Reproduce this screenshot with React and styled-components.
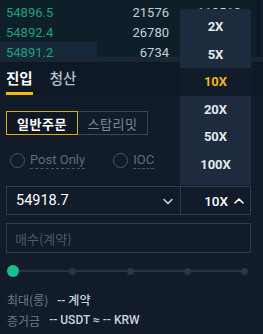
import React from "react";
import styled, { createGlobalStyle } from "styled-components";

const Global = createGlobalStyle`
  html, body { margin: 0; padding: 0; background: #111b29; }
  body { font-family: Roboto, "Noto Sans CJK KR", sans-serif; width: 263px; height: 334px; overflow: hidden; }
  * { box-sizing: border-box; }
`;

const Page = styled.div`
  position: relative;
  width: 263px;
  height: 334px;
  background: #111b29;
`;

const Book = styled.div`
  height: 57px;
  overflow: hidden;
  background: #0e1f2a;
  padding-top: 2px;
  border-right: 2px solid #0a1620;
  margin-right: 4px;
`;

const BookRow = styled.div`
  position: relative;
  height: 20px;
  display: grid;
  grid-template-columns: 110px 59px 1fr;
  align-items: center;
  font-size: 13px;
  background: ${(p) => (p.$depth ? `linear-gradient(90deg, #16293a 0 ${p.$depth}px, transparent ${p.$depth}px)` : "transparent")};
`;

const Price = styled.span`
  color: #1fa07f;
  padding-left: 6px;
`;

const Qty = styled.span`
  color: #c5cfdb;
  text-align: right;
`;

const Total = styled.span`
  color: #c5cfdb;
  text-align: right;
  padding-right: 16px;
`;

const Divider = styled.div`
  height: 5px;
  background: #1b2634;
`;

const Tabs = styled.div`
  display: flex;
  gap: 17px;
  padding: 0 6px;
  height: 33px;
  background: #0f1926;
`;

const Tab = styled.div`
  position: relative;
  display: flex;
  align-items: center;
  font-family: "Noto Sans CJK KR", sans-serif;
  font-size: 14.5px;
  font-weight: ${(p) => (p.$active ? 700 : 500)};
  color: ${(p) => (p.$active ? "#ffffff" : "#b6c0cc")};
  padding-bottom: 2px;
  &::after {
    content: "";
    display: ${(p) => (p.$active ? "block" : "none")};
    position: absolute;
    left: 0;
    right: 0;
    bottom: 0;
    height: 3px;
    background: #f0b90b;
  }
`;

const Form = styled.div`
  padding: 16px 12px 0 6px;
  display: flex;
  flex-direction: column;
`;

const Segment = styled.div`
  display: flex;
  height: 24px;
`;

const SegBtn = styled.div`
  width: ${(p) => p.$w}px;
  display: flex;
  align-items: center;
  justify-content: center;
  font-family: "Noto Sans CJK KR", sans-serif;
  font-size: 13px;
  font-weight: ${(p) => (p.$active ? 700 : 400)};
  color: ${(p) => (p.$active ? "#ffffff" : "#7b8796")};
  border: 1px solid ${(p) => (p.$active ? "#d9ac1a" : "#3a4656")};
  border-left-width: ${(p) => (p.$active ? "1px" : "0")};
  background: ${(p) => (p.$active ? "#0e1722" : "transparent")};
  letter-spacing: 0.5px;
`;

const Radios = styled.div`
  display: flex;
  align-items: center;
  height: 18px;
  margin-top: 16px;
  padding-left: 4px;
  gap: 28px;
`;

const RadioItem = styled.div`
  display: flex;
  align-items: center;
  gap: 5px;
`;

const Circle = styled.span`
  width: 15px;
  height: 15px;
  border-radius: 50%;
  border: 1px solid #4a5666;
`;

const RadioLabel = styled.span`
  font-size: 13px;
  color: #5f6c7c;
  border-bottom: 1px dashed #4e5a6a;
  line-height: 16px;
`;

const InputRow = styled.div`
  display: flex;
  height: 29px;
  margin-top: 17px;
  border: 1px solid #2f3b4b;
`;

const PriceField = styled.div`
  width: 174px;
  display: flex;
  align-items: center;
  justify-content: space-between;
  padding: 0 6px 0 9px;
  font-size: 14.5px;
  color: #ffffff;
  border-right: 1px solid #2f3b4b;
`;

const LevField = styled.div`
  flex: 1;
  display: flex;
  align-items: center;
  justify-content: flex-end;
  gap: 5px;
  padding-right: 5px;
  font-size: 13.5px;
  font-weight: 500;
  color: #ffffff;
`;

const AmountField = styled.div`
  height: 30px;
  margin-top: 8px;
  border: 1px solid #2f3b4b;
  display: flex;
  align-items: center;
  padding-left: 8px;
  font-family: "Noto Sans CJK KR", sans-serif;
  font-size: 13px;
  color: #4d5969;
`;

const Slider = styled.div`
  position: relative;
  height: 14px;
  margin-top: 11px;
  display: flex;
  align-items: center;
  justify-content: space-between;
  padding: 0 3px 0 1px;
  &::before {
    content: "";
    position: absolute;
    left: 6px;
    right: 6px;
    top: 6px;
    height: 2px;
    background: #273241;
  }
`;

const Dot = styled.span`
  position: relative;
  width: ${(p) => (p.$on ? 12 : 7)}px;
  height: ${(p) => (p.$on ? 12 : 7)}px;
  border-radius: 50%;
  background: ${(p) => (p.$on ? "#17c08a" : "#2b3645")};
`;

const Info = styled.div`
  margin-top: 13px;
  display: flex;
  flex-direction: column;
  gap: 5px;
  padding-left: 1px;
`;

const InfoLine = styled.div`
  display: flex;
  align-items: center;
  gap: 9px;
  height: 16px;
`;

const InfoKey = styled.span`
  font-family: "Noto Sans CJK KR", sans-serif;
  font-size: 12px;
  color: #6f7b8b;
`;

const InfoVal = styled.span`
  font-family: Roboto, "Noto Sans CJK KR", sans-serif;
  font-size: 12px;
  font-weight: 500;
  color: #c9d2dd;
`;

const Menu = styled.div`
  position: absolute;
  left: 180px;
  top: 9px;
  width: 71px;
  height: 176px;
  background: #1e2a3d;
  border-radius: 2px 2px 0 0;
  padding-top: 4px;
  display: flex;
  flex-direction: column;
`;

const MenuItem = styled.div`
  height: 27.5px;
  display: flex;
  align-items: center;
  justify-content: center;
  font-size: 13px;
  font-weight: 700;
  color: ${(p) => (p.$sel ? "#f0b90b" : "#e4e9ef")};
  background: ${(p) => (p.$sel ? "#111b29" : "transparent")};
`;

const Chevron = ({ up }) => (
  <svg width="12" height="12" viewBox="0 0 12 12" fill="none">
    <path
      d={up ? "M2 8 L6 4 L10 8" : "M2 4.5 L6 8.5 L10 4.5"}
      stroke={up ? "#ffffff" : "#c5cfdb"}
      strokeWidth="1.6"
      strokeLinecap="round"
      strokeLinejoin="round"
    />
  </svg>
);

const rows = [
  { p: "54896.5", q: "21576", t: "118513" },
  { p: "54892.4", q: "26780", t: "145293" },
  { p: "54891.2", q: "6734", t: "152027", d: 97 },
];

const levs = ["2X", "5X", "10X", "20X", "50X", "100X"];

export default function App() {
  return (
    <Page>
      <Global />
      <Book>
        {rows.map((r) => (
          <BookRow key={r.p} $depth={r.d}>
            <Price>{r.p}</Price>
            <Qty>{r.q}</Qty>
            <Total>{r.t}</Total>
          </BookRow>
        ))}
      </Book>
      <Divider />
      <Tabs>
        <Tab $active>진입</Tab>
        <Tab>청산</Tab>
      </Tabs>
      <Form>
        <Segment>
          <SegBtn $active $w={72}>일반주문</SegBtn>
          <SegBtn $w={70}>스탑리밋</SegBtn>
        </Segment>
        <Radios>
          <RadioItem>
            <Circle />
            <RadioLabel>Post Only</RadioLabel>
          </RadioItem>
          <RadioItem>
            <Circle />
            <RadioLabel>IOC</RadioLabel>
          </RadioItem>
          <RadioItem>
            <Circle />
            <RadioLabel>FOK</RadioLabel>
          </RadioItem>
        </Radios>
        <InputRow>
          <PriceField>
            54918.7
            <Chevron />
          </PriceField>
          <LevField>
            10X
            <Chevron up />
          </LevField>
        </InputRow>
        <AmountField>매수(계약)</AmountField>
        <Slider>
          <Dot $on />
          <Dot />
          <Dot />
          <Dot />
          <Dot />
        </Slider>
        <Info>
          <InfoLine>
            <InfoKey>최대(롱)</InfoKey>
            <InfoVal>-- 계약</InfoVal>
          </InfoLine>
          <InfoLine>
            <InfoKey>증거금</InfoKey>
            <InfoVal>-- USDT ≈ -- KRW</InfoVal>
          </InfoLine>
        </Info>
      </Form>
      <Menu>
        {levs.map((l) => (
          <MenuItem key={l} $sel={l === "10X"}>
            {l}
          </MenuItem>
        ))}
      </Menu>
    </Page>
  );
}
